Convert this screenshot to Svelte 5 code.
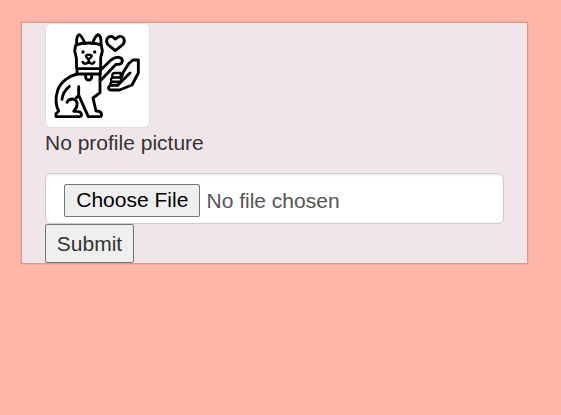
<script>
  let caption = 'No profile picture';
</script>

<main>
  <form class="panel" on:submit|preventDefault>
    <div class="thumbnail">
      <svg viewBox="18 18 309 309" fill="none" stroke="#000" stroke-width="8.6" stroke-linejoin="round" stroke-linecap="round" aria-hidden="true">
        <path d="M110 150 L109 120 L104 99 L107 82 Q122 75 146 75 Q171 75 184 82 L187 100 L182 119 L182 150" />
        <path d="M110 80 V65 Q111 53 118 50 Q123 51 135 76 M158 76 Q165 54 174 50 Q182 53 183 66 V80" />
        <path d="M111 152 H181 V168 H111 Z" />
        <path d="M137 170 V178 Q139 186 146 186 Q153 186 155 178 V170" />
        <path stroke-width="7.5" d="M138 114 Q138 110 146 110 Q155 110 155 114 Q154 119 146 124 Q138 119 138 114 M146 125 V131 M128 132 Q131 137 136 137 Q142 137 146 131 Q151 137 156 137 Q161 137 163 132" />
        <path d="M111 168 C88 174 62 191 53 217 C46 239 47 262 56 279 L48 287 V296 H119 Q126 295 124 287 Q121 280 109 280 H101 L109 269 C116 250 106 243 97 243 Q86 243 81 253" />
        <path d="M66 244 Q68 222 88 205 M116 206 V232 L104 245 M116 231 L135 274 L145 296 H178 Q187 295 184 286 Q181 279 168 279 L159 240 L180 224 V169" />
        <path d="M182 156 L213 126 Q225 117 237 118 Q248 120 247 130 Q245 139 234 139 H228 L184 185" />
        <path d="M295 126 H279 L266 137 L250 162 L245 176 M295 126 V165 L276 201 L239 216 H213 Q204 215 206 207 Q208 202 217 202 H233 L270 165" />
        <path stroke-width="7" d="M217 171 Q218 165 225 165 H242 V178 H217 Z M213 185 Q214 179 219 179 H243 V191 H216 Z M211 199 Q211 192 218 192 H242 L234 202" />
        <path d="M226 98 L203 79 Q197 70 202 61 Q207 54 217 56 L226 63 L236 56 Q246 53 251 61 Q256 70 249 79 Z" />
        <g fill="#000" stroke="none"><circle cx="129" cy="102" r="5" /><circle cx="164" cy="102" r="5" /></g>
      </svg>
    </div>
    <div class="caption">{caption}</div>
    <input class="file" type="file" aria-label="Profile picture" />
    <button class="submit" type="submit">Submit</button>
  </form>
</main>

<style>
  :global(body) { background: #ffb5a7; }
  main {
    box-sizing: border-box;
    height: 415px;
    padding: 23px 34px 0 22px;
    font: 21px/30px "Liberation Sans", Arial, sans-serif;
    color: #333;
  }
  .panel {
    box-sizing: border-box;
    display: flex;
    flex-direction: column;
    align-items: flex-start;
    height: 240px;
    padding: 0 23px;
    background: #f0e6ea;
    box-shadow: 0 0 0 1px rgba(0, 0, 0, 0.1), 0 0 0 2px rgba(0, 0, 0, 0.05);
  }
  .thumbnail {
    box-sizing: border-box;
    flex: none;
    width: 105px;
    height: 105px;
    border: 1px solid #ddd;
    border-radius: 6px;
    background: #fff;
  }
  svg { display: block; width: 103px; height: 103px; }
  .caption { height: 30px; margin-bottom: 15px; }
  .file {
    box-sizing: border-box;
    width: 100%;
    height: 51px;
    padding: 10px 18px 6px;
    border: 1px solid #ccc;
    border-radius: 6px;
    background: #fff;
    box-shadow: inset 0 1.5px 1.5px rgba(0, 0, 0, 0.075);
    color: #555;
    font: inherit;
  }
  .file::file-selector-button {
    box-sizing: border-box;
    width: 136px;
    height: 33px;
    margin: 0 6.5px 0 0;
    padding: 0 0 1.2px 0.6px;
    border: 1px solid #767676;
    border-radius: 2px;
    background: #efefef;
    color: #000;
    font: inherit;
    vertical-align: 1px;
  }
  .submit {
    box-sizing: border-box;
    width: 89px;
    height: 39px;
    padding: 0;
    border: 1px solid #767676;
    border-radius: 2px;
    background: #efefef;
    color: #333;
    font: inherit;
  }
</style>
